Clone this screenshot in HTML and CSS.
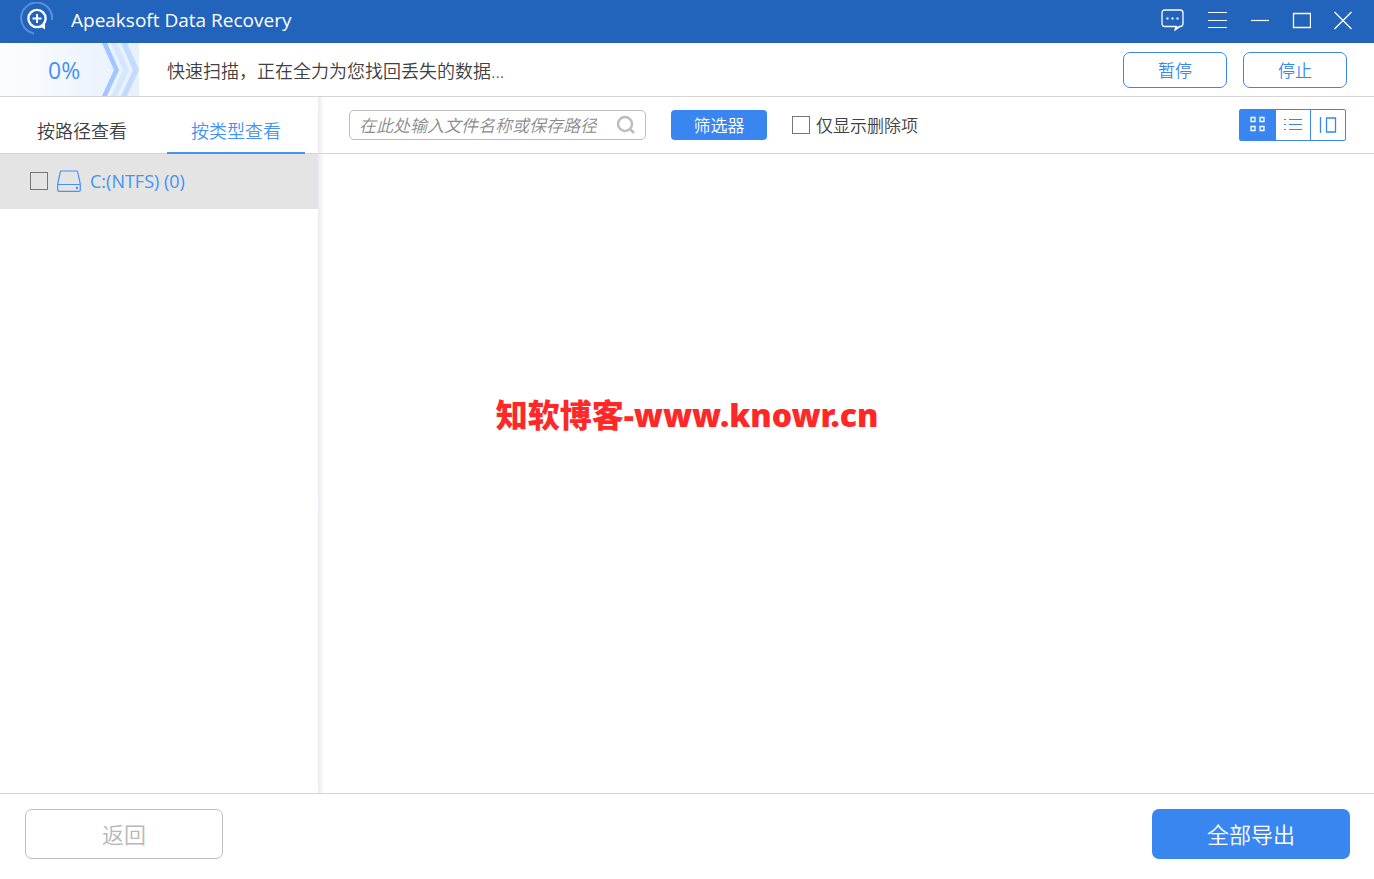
FILE: index.html
```html
<!DOCTYPE html>
<html lang="zh-CN">
<head>
<meta charset="utf-8">
<meta name="viewport" content="width=device-width, initial-scale=1">
<title>Apeaksoft Data Recovery</title>
<link rel="stylesheet" href="styles.css">
</head>
<body>
<div class="app">
  <header class="titlebar">
    <svg class="logo" width="36" height="36" viewBox="0 0 36 36" fill="none" aria-hidden="true">
      <path d="M16 31.400A15.500 15.500 0 1 1 34 18" stroke="#5b8fd4" stroke-width="2"/>
      <circle cx="19" cy="16.500" r="8.600" stroke="#fff" stroke-width="2.400"/>
      <path d="M19 12v9M14.500 16.500h9" stroke="#fff" stroke-width="2"/>
      <path d="M20 25.500l7-5v7l-3-2z" fill="#fff"/>
    </svg>
    <h1 class="title">Apeaksoft Data Recovery</h1>
    <div class="window-controls">
      <button class="window-button" type="button" aria-label="反馈">
        <svg width="24" height="22" viewBox="0 0 24 22" fill="none"><path d="M4 1h15q3 0 3 3v10.500q0 3-3 3l-5 3.500 1-3.500H4q-3 0-3-3V4q0-3 3-3z" stroke="#fff" stroke-width="1.300"/><path d="M14 20.500l1-3h4z" fill="#fff"/><path d="M5.500 8.500h2v2h-2zM10.500 8.500h2v2h-2zM15.500 8.500h2v2h-2z" fill="#fff"/></svg>
      </button>
      <button class="window-button" type="button" aria-label="菜单">
        <svg width="20" height="20" viewBox="0 0 20 20" stroke="#fff"><path d="M1 2.500h19M1 10.500h19M1 17.500h19" stroke-width="1.200"/></svg>
      </button>
      <button class="window-button" type="button" aria-label="最小化">
        <svg width="20" height="20" viewBox="0 0 20 20" stroke="#fff"><path d="M2 10.500h18" stroke-width="1.200"/></svg>
      </button>
      <button class="window-button" type="button" aria-label="最大化">
        <svg width="20" height="20" viewBox="0 0 20 20" fill="none" stroke="#fff"><path d="M2.500 3.500h17v14h-17z" stroke-width="1.300"/></svg>
      </button>
      <button class="window-button" type="button" aria-label="关闭">
        <svg width="20" height="20" viewBox="0 0 20 20" fill="none" stroke="#fff"><path d="M1.500 2l17 17M18.500 2l-17 17" stroke-width="1.300"/></svg>
      </button>
    </div>
  </header>

  <section class="status">
    <div class="progress">
      <span class="percent">0%</span>
      <svg class="chevrons" width="38" height="53" viewBox="0 0 38 53" aria-hidden="true">
        <path d="M1 0h5l12 27-12 26H1l12-26z" fill="#a0c7ff"/>
        <path d="M10 0h6l12 27-12 26h-6l12-26z" fill="#d5e6ff"/>
        <path d="M20 0h6l12 27-12 26h-6l12-26z" fill="#c3dbff"/>
      </svg>
    </div>
    <p class="message">快速扫描，正在全力为您找回丢失的数据...</p>
    <div class="status-actions">
      <button class="outline-button" type="button">暂停</button>
      <button class="outline-button" type="button">停止</button>
    </div>
  </section>

  <main class="workspace">
    <aside class="sidebar">
      <nav class="tabs">
        <button class="tab" type="button">按路径查看</button>
        <button class="tab tab-active" type="button">按类型查看</button>
      </nav>
      <label class="drive">
        <input class="check" type="checkbox">
        <svg class="drive-icon" width="24" height="22" viewBox="0 0 24 22" fill="none" stroke="#4492f8" stroke-width="1.200" aria-hidden="true">
          <path d="M4.500 1h15q1 0 1.200 1L23.300 14v6q0 1.300-1.300 1.300H2q-1.300 0-1.300-1.300v-6L3.300 2q.2-1 1.200-1zM.7 14.500h22.600"/><circle cx="20" cy="18" r="1.200" fill="#4492f8" stroke="none"/>
        </svg>
        <span class="drive-name">C:(NTFS) (0)</span>
      </label>
    </aside>

    <section class="content">
      <div class="toolbar">
        <div class="search">
          <input class="search-input" type="text" aria-label="搜索" placeholder="在此处输入文件名称或保存路径">
          <button class="search-button" type="button" aria-label="搜索">
            <svg width="20" height="20" viewBox="0 0 20 20" fill="none" stroke="#bdbdbd" stroke-width="2.500"><circle cx="9" cy="9" r="7"/><path d="M14 14l4 4"/></svg>
          </button>
        </div>
        <button class="filter-button" type="button">筛选器</button>
        <label class="deleted-only"><input class="check" type="checkbox"><span class="deleted-text">仅显示删除项</span></label>
        <div class="views">
          <button class="view view-active" type="button" aria-label="缩略图">
            <svg width="18" height="18" viewBox="0 0 18 18" fill="none" stroke="#fff" stroke-width="1.300"><path d="M2 1.500h4v4H2zM11 1.500h4v4h-4zM2 10.500h4v4H2zM11 10.500h4v4h-4z"/></svg>
          </button>
          <button class="view" type="button" aria-label="列表">
            <svg width="18" height="18" viewBox="0 0 18 18" stroke="#3986f1"><path d="M0 3.500h2M5 3.500h13M0 8.500h2M5 8.500h13M0 13.500h2M5 13.500h13"/></svg>
          </button>
          <button class="view" type="button" aria-label="详情">
            <svg width="18" height="18" viewBox="0 0 18 18" fill="none" stroke="#3986f1" stroke-width="1.300"><path d="M1.500 1v16M7.500 2h9v14h-9z"/></svg>
          </button>
        </div>
      </div>
      <div class="files"></div>
    </section>
  </main>

  <footer class="footer">
    <button class="back-button" type="button">返回</button>
    <button class="export-button" type="button">全部导出</button>
  </footer>

  <div class="watermark">知软博客-www.knowr.cn</div>
</div>
</body>
</html>
```

FILE: styles.css
```css
* {
  box-sizing: border-box;
}

body {
  margin: 0;
  background: #fff;
  color: #404040;
  font: 350 18px/24px "Noto Sans", "Noto Sans CJK SC", sans-serif;
}

button,
input {
  margin: 0;
  padding: 0;
  font: inherit;
}

button {
  border: 0;
  background: none;
  cursor: pointer;
}

svg {
  display: block;
}

.app {
  position: relative;
  display: flex;
  flex-direction: column;
  min-height: 100vh;
}

.titlebar {
  display: flex;
  align-items: center;
  gap: 17px;
  height: 43px;
  padding: 0 21px 4px 18px;
  background: #2264bb;
  color: #fff;
}

.title,
.percent,
.drive-name {
  font-family: "Open Sans", sans-serif;
  font-weight: 400;
}

.title {
  margin: 0;
  font-size: 19px;
}

.window-controls {
  display: flex;
  flex: 1;
  justify-content: flex-end;
  gap: 22px;
}

.window-button {
  display: grid;
  place-items: center;
}

.status {
  display: flex;
  align-items: center;
  height: 54px;
  border-bottom: 1px solid #d5d5d5;
}

.progress {
  display: flex;
  align-items: center;
  justify-content: space-between;
  width: 139px;
  height: 53px;
  padding-left: 48px;
  background: linear-gradient(to right, #fcfdff, #e8f0fc);
}

.percent {
  color: #4492f8;
  font-size: 23px;
}

.message {
  flex: 1;
  margin: 0 0 0 28px;
  padding-top: 2px;
}

.status-actions {
  display: flex;
  gap: 16px;
  padding-right: 27px;
}

.outline-button {
  width: 104px;
  height: 36px;
  padding-top: 2px;
  border: 1px solid #3986f1;
  border-radius: 7px;
  color: #3986f1;
  font-size: 17px;
}

.workspace {
  display: flex;
  flex: 1;
}

.sidebar {
  width: 318px;
}

.tabs {
  display: flex;
  justify-content: space-between;
  height: 57px;
  padding: 0 13px;
  border-bottom: 1px solid #d5d5d5;
}

.tab {
  width: 138px;
  height: 57px;
  padding-top: 12px;
  border-bottom: 2px solid transparent;
  color: #404040;
}

.tab-active {
  border-color: #4492f8;
  color: #4492f8;
}

.drive {
  display: flex;
  align-items: center;
  gap: 9px;
  height: 55px;
  padding: 0 0 2px 30px;
  background: #e4e4e4;
  color: #4492f8;
}

.check {
  width: 18px;
  height: 18px;
  border: 1px solid #777;
  appearance: none;
}

.check:checked {
  background: #3986f1;
}

.content {
  flex: 1;
  min-width: 0;
  background: linear-gradient(to right, #e8ebef, #fff 6px);
}

.toolbar {
  display: flex;
  align-items: center;
  height: 57px;
  padding: 0 28px 0 31px;
  border-bottom: 1px solid #d5d5d5;
}

.search {
  display: flex;
  align-items: center;
  justify-content: space-between;
  width: 297px;
  height: 30px;
  padding: 0 9px;
  border: 1px solid #bdbdbd;
  border-radius: 5px;
}

.search-input {
  width: 238px;
  padding-top: 2px;
  border: 0;
  outline: 0;
  background: none;
  font-size: 17px;
  font-style: italic;
}

.search-input::placeholder {
  color: #8b8b8b;
}

.filter-button {
  width: 96px;
  height: 30px;
  margin-left: 25px;
  padding-top: 2px;
  border-radius: 4px;
  background: #3986f1;
  color: #fff;
  font-size: 17px;
}

.deleted-only {
  display: flex;
  align-items: center;
  gap: 6px;
  margin-left: 25px;
  font-size: 17px;
}

.deleted-text {
  padding-top: 2px;
}

.views {
  display: flex;
  height: 32px;
  margin-left: auto;
  border: 1px solid #3986f1;
  border-radius: 2px;
}

.view {
  display: grid;
  place-items: center;
  width: 35px;
}

.view + .view {
  border-left: 1px solid #3986f1;
}

.view-active {
  background: #3986f1;
}

.footer {
  display: flex;
  align-items: center;
  justify-content: space-between;
  height: 86px;
  padding: 0 24px 5px 25px;
  border-top: 1px solid #d5d5d5;
}

.back-button,
.export-button {
  width: 198px;
  height: 50px;
  border-radius: 7px;
  font-size: 22px;
}

.back-button {
  border: 1px solid #bdbdbd;
  color: #b8b8b8;
}

.export-button {
  background: #3986f1;
  color: #fff;
}

.watermark {
  position: absolute;
  top: 395px;
  left: 0;
  width: 100%;
  color: #ff2828;
  font-size: 32px;
  font-weight: 900;
  line-height: 40px;
  text-align: center;
  pointer-events: none;
}
```
